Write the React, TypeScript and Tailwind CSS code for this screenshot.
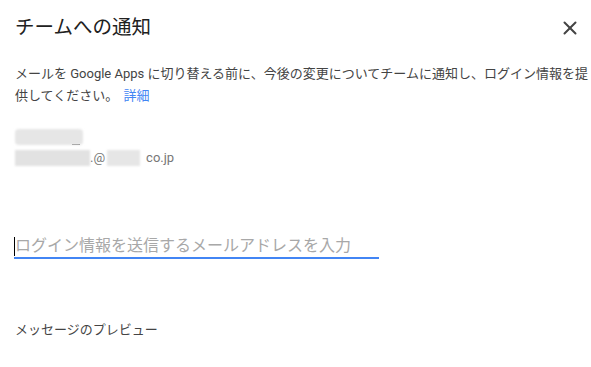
import { X } from 'lucide-react';

const font = { fontFamily: 'Roboto, "Noto Sans CJK JP", sans-serif' };

export default function App() {
  return (
    <div style={font} className="w-[591px] h-[367px] bg-white overflow-hidden flex flex-col px-[15px] text-[#444]">
      <div className="h-[56px] flex items-center justify-between">
        <h1 className="text-[19.5px] leading-none text-[#212121]">チームへの通知</h1>
        <button className="-mr-[5px] text-[#444]">
          <X size={22} strokeWidth={2.2} />
        </button>
      </div>

      <p className="mt-[7px] text-[13px] leading-[22px]">
        <span className="whitespace-nowrap">メールを Google Apps に切り替える前に、今後の変更についてチームに通知し、ログイン情報を提</span>
        <br />
        供してください。 <a className="text-[#4285f4] ml-[2px]">詳細</a>
      </p>

      {/* blurred account */}
      <div className="mt-[20px] flex items-end h-[18px]">
        <div className="w-[68px] h-[16px] rounded-[4px] bg-[#e6e6e6] blur-[1px]" />
        <div className="w-[8px] h-[1px] bg-[#333] -ml-[11px]" />
      </div>
      <div className="mt-[4px] flex items-center h-[18px] text-[13px] text-[#777]">
        <div className="w-[75px] h-[16px] bg-[#e2e2e2] blur-[1px]" />
        <span>.@</span>
        <div className="w-[33px] h-[16px] bg-[#e6e6e6] blur-[1px] ml-[2px]" />
        <span className="ml-[6px]">co.jp</span>
      </div>

      <div className="mt-[68px] w-[365px] -ml-px border-b-2 border-[#4285f4] h-[24px] flex items-center">
        <span className="w-px h-[19px] bg-black" />
        <span className="text-[16px] text-[#a8a8a8] leading-none">ログイン情報を送信するメールアドレスを入力</span>
      </div>

      <div className="mt-[62px] text-[13px] leading-[18px] text-[#444]">メッセージのプレビュー</div>
    </div>
  );
}
